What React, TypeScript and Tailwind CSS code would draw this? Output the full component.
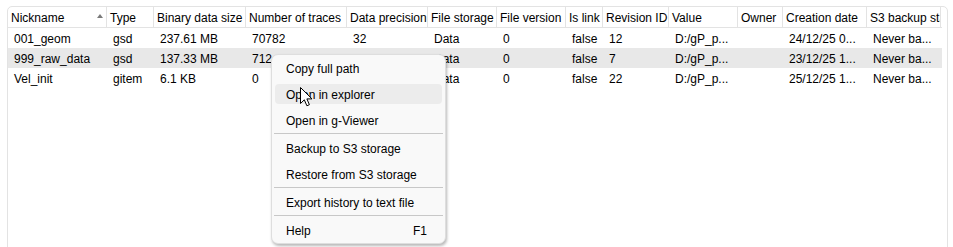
import React from "react";

const cols = [
  { name: "Nickname", w: "w-[99px]" },
  { name: "Type", w: "w-[47px]" },
  { name: "Binary data size", w: "w-[92px]" },
  { name: "Number of traces", w: "w-[101px]" },
  { name: "Data precision", w: "w-[81px]" },
  { name: "File storage", w: "w-[69px]" },
  { name: "File version", w: "w-[69px]" },
  { name: "Is link", w: "w-[37px]" },
  { name: "Revision ID", w: "w-[66px]" },
  { name: "Value", w: "w-[69px]" },
  { name: "Owner", w: "w-[45px]" },
  { name: "Creation date", w: "w-[84px]" },
  { name: "S3 backup status", w: "w-[74px]" },
];

const rows = [
  ["001_geom", "gsd", "237.61 MB", "70782", "32", "Data", "0", "false", "12", "D:/gP_p...", "", "24/12/25 0...", "Never ba..."],
  ["999_raw_data", "gsd", "137.33 MB", "712", "", "Data", "0", "false", "7", "D:/gP_p...", "", "23/12/25 1...", "Never ba..."],
  ["Vel_init", "gitem", "6.1 KB", "0", "", "Data", "0", "false", "22", "D:/gP_p...", "", "25/12/25 1...", "Never ba..."],
];

type Item = { label: string; hot?: boolean; key?: string } | "sep";

const menu: Item[] = [
  { label: "Copy full path" },
  { label: "Open in explorer", hot: true },
  { label: "Open in g-Viewer" },
  "sep",
  { label: "Backup to S3 storage" },
  { label: "Restore from S3 storage" },
  "sep",
  { label: "Export history to text file" },
  "sep",
  { label: "Help", key: "F1" },
];

function Cursor() {
  return (
    <svg className="absolute left-[300px] top-[87px]" width="13" height="20" viewBox="0 0 13 20">
      <path
        d="M0.5 0.5 L0.5 16.5 L4.3 12.8 L6.9 18.8 L9.4 17.7 L6.9 11.9 L12 11.9 Z"
        fill="#fff"
        stroke="#000"
        strokeWidth="1"
        strokeLinejoin="miter"
      />
    </svg>
  );
}

function ContextMenu() {
  return (
    <div className="absolute left-[271px] top-[54px] w-[175px] bg-[#f9f9f9] border border-[#dedede] rounded-[7px] shadow-[1px_2px_3px_rgba(0,0,0,0.28)]">
      {menu.map((m, i) =>
        m === "sep" ? (
          <div key={i} className="h-[2px] mx-[2px]">
            <div className="h-px bg-[#c8c8c8]" />
          </div>
        ) : (
          <div key={i} className="h-[26px] py-[3px] px-[3px]">
            <div
              className={
                "h-[20px] rounded-[4px] flex items-center justify-between pl-[11px] pr-[15px] pt-[2px] " +
                (m.hot ? "bg-[#ececec]" : "")
              }
            >
              <span>{m.label}</span>
              {m.key && <span>{m.key}</span>}
            </div>
          </div>
        )
      )}
    </div>
  );
}

export default function App() {
  return (
    <div
      className="relative w-[953px] h-[247px] bg-white overflow-hidden text-[12px] text-black"
      style={{ fontFamily: '"Liberation Sans", Arial, sans-serif' }}
    >
      <div className="pt-[6px] pl-[7px] pr-[5px] h-full">
        <div className="h-[250px] border border-[#e3e3e3] rounded-t-[5px] pr-[5px]">
          {/* header */}
          <div className="flex h-[21px] border-b border-[#e3e3e3]">
            {cols.map((c, i) => (
              <div
                key={c.name}
                className={`${c.w} shrink-0 relative flex items-center pl-[3px] pt-px border-r border-[#e3e3e3] overflow-hidden whitespace-nowrap`}
              >
                {c.name}
                {i === 0 && (
                  <svg className="absolute left-[89px] top-[7px]" width="6" height="4" viewBox="0 0 6 4">
                    <path d="M3 0 L6 4 L0 4 Z" fill="#7a7a7a" />
                  </svg>
                )}
              </div>
            ))}
          </div>
          {/* rows */}
          {rows.map((r, ri) => (
            <div key={ri} className={`flex h-[20px] ${ri === 1 ? "bg-[#e8e8e8]" : ""}`}>
              {r.map((v, ci) => (
                <div
                  key={ci}
                  className={`${cols[ci].w} shrink-0 flex items-center pl-[6px] pt-px overflow-hidden whitespace-nowrap`}
                >
                  {v}
                </div>
              ))}
            </div>
          ))}
        </div>
      </div>
      <ContextMenu />
      <Cursor />
    </div>
  );
}
